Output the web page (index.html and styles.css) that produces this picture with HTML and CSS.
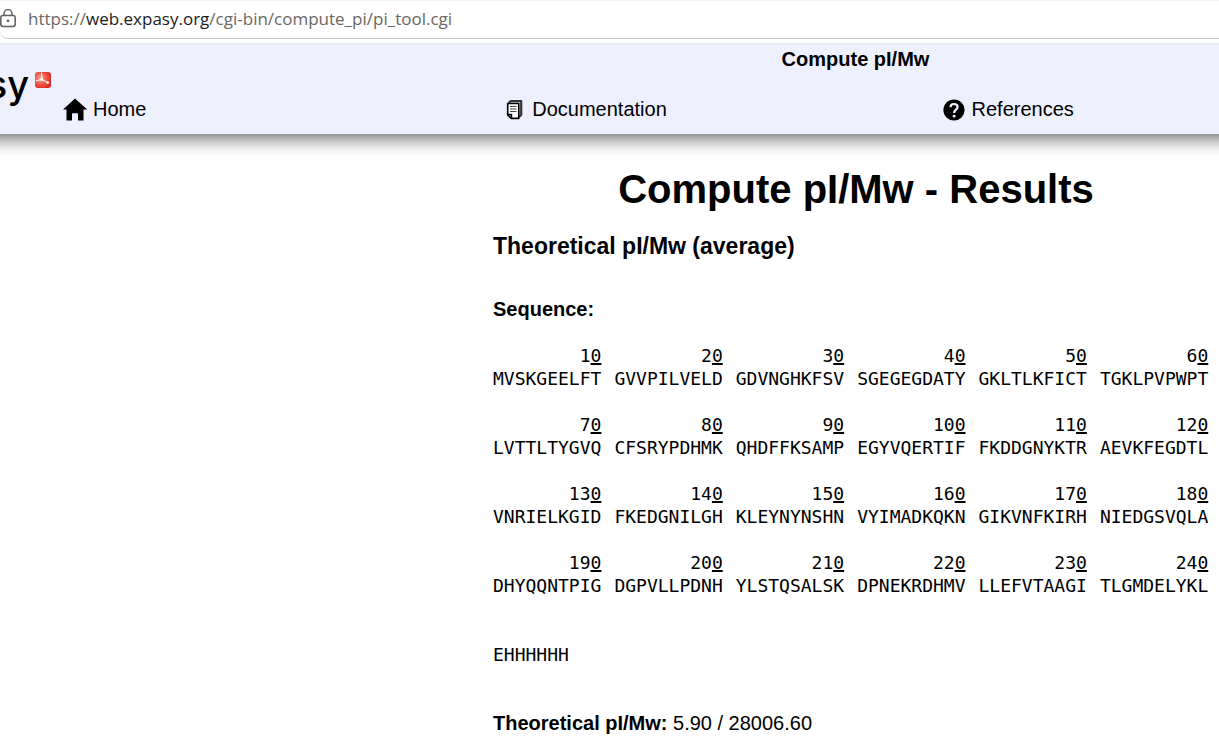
FILE: index.html
```
<!DOCTYPE html>
<html lang="en">
<head>
<meta charset="UTF-8">
<title>Compute pI/Mw - Results</title>
<link rel="stylesheet" href="styles.css">
</head>
<body>
  <div class="browser">
    <div class="address">
      <svg class="lock" viewBox="0 0 16 20" width="16" height="20">
        <rect x="0.8" y="6.4" width="14.4" height="11" rx="2.2"/>
        <path d="M4 6.4V4.6a4 4 0 0 1 8 0v1.8"/>
        <circle cx="8" cy="11.8" r="0.6"/>
      </svg>
      <a class="url" href="#">https://<b>web.expasy.org</b>/cgi-bin/compute_pi/pi_tool.cgi</a>
    </div>
  </div>

  <header class="header">
    <a class="logo" href="#">
      <span class="logo-text">sy</span>
      <svg class="logo-mark" viewBox="0 0 16 16" width="16" height="16">
        <defs>
          <radialGradient id="red" cx="0.35" cy="0.4" r="0.7">
            <stop offset="0" stop-color="#f6b09a"/>
            <stop offset="0.45" stop-color="#ed6150"/>
            <stop offset="1" stop-color="#e3211f"/>
          </radialGradient>
        </defs>
        <rect width="16" height="16" rx="3" fill="url(#red)"/>
        <path d="M6.5 0.5L7 7L1 9M7 7.5L12.5 10.5" fill="none" stroke="#fff" stroke-width="1"/>
        <path d="M4.8 8.6L6.6 5.2L9 8.8Z" fill="#fff"/>
        <circle cx="12.6" cy="10.6" r="1.4" fill="#fff"/>
      </svg>
    </a>
    <div class="tool-name">Compute pI/Mw</div>
    <nav class="nav">
      <a href="#">
        <svg viewBox="0 0 24 24" width="24" height="24">
          <path d="M12 1.5L24.2 12.5H20.5V23.6H15V17Q15 16.2 14.2 16.2H9.8Q9 16.2 9 17V23.6H3.5V12.5H0Z"/>
        </svg>
        Home
      </a>
      <a href="#">
        <svg viewBox="-1 -1 24 24" width="24" height="24">
          <path d="M5.5 5L7.5 3.2H18.2V17L16 19" fill="none" stroke="#333" stroke-width="2.2" stroke-linejoin="round"/>
          <path d="M4.7 5.5H15.8V20.4H8.2L4.7 17Z" fill="#fff" stroke="#000" stroke-width="1.6" stroke-linejoin="round"/>
          <path d="M4.7 16.6H8.4V20.4" fill="none" stroke="#000" stroke-width="1.6"/>
          <path d="M7 8.5H13.6M7 11H13.6M7 13.5H13.6" stroke="#444" stroke-width="1"/>
        </svg>
        Documentation
      </a>
      <a href="#">
        <svg viewBox="0 0 24 24" width="24" height="24">
          <circle cx="12" cy="13" r="10.6"/>
          <path d="M8.5 10.2C8.5 8.2 9.9 7 12 7S15.6 8.2 15.6 10C15.6 12.6 12.1 12.7 12.1 16" fill="none" stroke="#eef0fe" stroke-width="2.2"/>
          <circle cx="12.1" cy="19.2" r="1.4" fill="#eef0fe"/>
        </svg>
        References
      </a>
    </nav>
  </header>

  <main class="results">
    <h1>Compute pI/Mw - Results</h1>
    <h2>Theoretical pI/Mw (average)</h2>
    <h3>Sequence:</h3>

    <div class="sequence">
      <div>1<u>0</u></div><div>2<u>0</u></div><div>3<u>0</u></div><div>4<u>0</u></div><div>5<u>0</u></div><div>6<u>0</u></div>
      <div>MVSKGEELFT</div><div>GVVPILVELD</div><div>GDVNGHKFSV</div><div>SGEGEGDATY</div><div>GKLTLKFICT</div><div>TGKLPVPWPT</div>
    </div>
    <div class="sequence">
      <div>7<u>0</u></div><div>8<u>0</u></div><div>9<u>0</u></div><div>10<u>0</u></div><div>11<u>0</u></div><div>12<u>0</u></div>
      <div>LVTTLTYGVQ</div><div>CFSRYPDHMK</div><div>QHDFFKSAMP</div><div>EGYVQERTIF</div><div>FKDDGNYKTR</div><div>AEVKFEGDTL</div>
    </div>
    <div class="sequence">
      <div>13<u>0</u></div><div>14<u>0</u></div><div>15<u>0</u></div><div>16<u>0</u></div><div>17<u>0</u></div><div>18<u>0</u></div>
      <div>VNRIELKGID</div><div>FKEDGNILGH</div><div>KLEYNYNSHN</div><div>VYIMADKQKN</div><div>GIKVNFKIRH</div><div>NIEDGSVQLA</div>
    </div>
    <div class="sequence">
      <div>19<u>0</u></div><div>20<u>0</u></div><div>21<u>0</u></div><div>22<u>0</u></div><div>23<u>0</u></div><div>24<u>0</u></div>
      <div>DHYQQNTPIG</div><div>DGPVLLPDNH</div><div>YLSTQSALSK</div><div>DPNEKRDHMV</div><div>LLEFVTAAGI</div><div>TLGMDELYKL</div>
    </div>
    <div class="sequence last">
      <div>EHHHHHH</div>
    </div>

    <p><strong>Theoretical pI/Mw:</strong> 5.90 / 28006.60</p>
  </main>
</body>
</html>
```
FILE: styles.css
```
* { box-sizing: border-box; }
body {
margin: 0;
color: #000;
background: #fff;
font-family: "Liberation Sans", Arial, sans-serif;
font-size: 20px;
line-height: 23px;
overflow-x: hidden;
}
a { color: inherit; text-decoration: none; }
.browser {
padding-bottom: 4px;
border-bottom: 1px solid #e6e6ea;
}
.address {
display: flex;
align-items: center;
gap: 12px;
height: 39px;
padding-bottom: 2px;
border-top: 1px solid #f3f3f3;
border-bottom: 1px solid #c8c8c8;
border-bottom-left-radius: 8px;
}
.lock {
fill: none;
stroke: #605e5c;
stroke-width: 1.5;
}
.url {
color: #6b6661;
font-family: "Open Sans", sans-serif;
font-size: 17px;
}
.url b { color: #1b1b1b; font-weight: normal; }
.header {
position: relative;
height: 90px;
padding-top: 4px;
background: #eef0fe;
}
.logo {
position: absolute;
left: 0;
top: 20px;
width: 51px;
height: 50px;
display: flex;
justify-content: flex-end;
gap: 6px;
overflow: hidden;
}
.logo-text {
font-family: Inter, sans-serif;
font-size: 38px;
font-weight: 500;
line-height: 40px;
}
.logo-mark { flex: none; margin-top: 8px; }
.tool-name {
padding-left: 492px;
text-align: center;
font-weight: bold;
}
.nav {
display: grid;
grid-template-columns: 38% 38% auto;
padding: 26px 0 0 63px;
}
.nav a {
display: flex;
align-items: center;
gap: 6px;
}
/* header shadow */
.results {
padding: 32px 0 0 493px;
background: linear-gradient(#949494, #c4c4c4 7px, #ededed 14px, #fff 22px);
}
h1 {
margin: 0 0 21px;
text-align: center;
font-size: 40px;
line-height: 46px;
}
h2 {
margin: 0 0 39px;
font-size: 23px;
line-height: 26px;
}
h3 {
margin: 0 0 23px;
font-size: 20px;
}
.sequence {
display: grid;
grid-template-columns: repeat(6, max-content);
column-gap: 13px;
margin-bottom: 23px;
font-family: "DejaVu Sans Mono", monospace;
font-size: 18px;
text-align: right;
}
.sequence u { text-decoration-thickness: 2px; }
.sequence.last { margin: 46px 0; }
p { margin: 0; }
```
